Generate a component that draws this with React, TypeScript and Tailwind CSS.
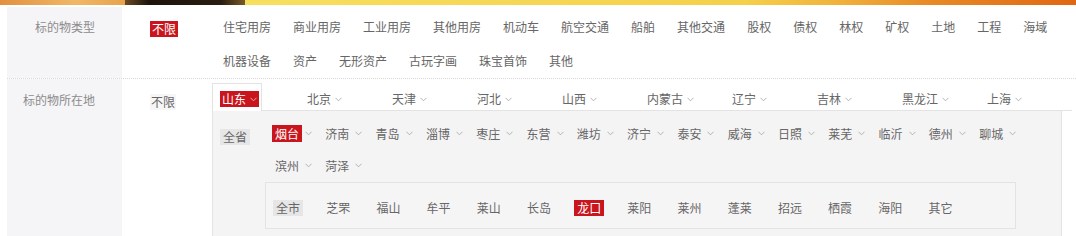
import React from 'react';

const types = [
  '住宅用房', '商业用房', '工业用房', '其他用房', '机动车', '航空交通', '船舶', '其他交通',
  '股权', '债权', '林权', '矿权', '土地', '工程', '海域',
  '机器设备', '资产', '无形资产', '古玩字画', '珠宝首饰', '其他',
];

const provinces = ['北京', '天津', '河北', '山西', '内蒙古', '辽宁', '吉林', '黑龙江', '上海'];

const cities = [
  '烟台', '济南', '青岛', '淄博', '枣庄', '东营', '潍坊', '济宁', '泰安', '威海',
  '日照', '莱芜', '临沂', '德州', '聊城', '滨州', '菏泽',
];

const districts = ['芝罘', '福山', '牟平', '莱山', '长岛', '龙口', '莱阳', '莱州', '蓬莱', '招远', '栖霞', '海阳', '其它'];

const Arrow: React.FC<{ light?: boolean; className?: string }> = ({ light, className }) => (
  <svg width="7" height="5" viewBox="0 0 7 5" className={className}>
    <polyline
      points="0.5,0.8 3.5,3.8 6.5,0.8"
      fill="none"
      stroke={light ? '#f3b9b9' : '#aaaaaa'}
      strokeWidth="0.9"
    />
  </svg>
);

const App: React.FC = () => {
  return (
    <div className="w-[1076px] h-[236px] overflow-hidden bg-white text-[12px] text-[#666] font-['Noto_Sans_CJK_SC','Microsoft_YaHei',sans-serif]">
      {/* banner strip */}
      <div className="flex h-[5px]">
        <div className="w-[125px] bg-[linear-gradient(90deg,#e29040,#f0b866_60%,#e9a24c)]" />
        <div className="w-[120px] bg-[linear-gradient(90deg,#6a4a22,#1e140c_20%,#2a1c10_80%,#7a5a28)]" />
        <div className="flex-1 bg-[linear-gradient(90deg,#f7df5e_0%,#f5d04a_60%,#f0b03a_72%,#e88a26_82%,#e06612_100%)]" />
      </div>

      <div className="pl-[7px] pt-[2px]">
        {/* row 1 */}
        <div className="flex border-b border-dotted border-[#d8d8d8]">
          <div className="w-[115px] shrink-0 bg-[#f5f4f7] pr-[27px] pt-[3px] text-right leading-[34px] text-[#8c8c8c]">
            标的物类型
          </div>
          <div className="w-[90px] shrink-0 pl-[28px] pt-[3px] leading-[34px]">
            <span className="inline-block bg-[#c9161e] px-[2px] leading-[16px] text-white align-middle">不限</span>
          </div>
          <div className="flex w-[850px] flex-wrap pt-[3px] leading-[34px]">
            {types.map((t) => (
              <span key={t} className="mx-[11px]">
                {t}
              </span>
            ))}
          </div>
        </div>

        {/* row 2 */}
        <div className="flex">
          <div className="h-[160px] w-[115px] shrink-0 bg-[#f5f4f7] pr-[27px] pt-[4px] text-right leading-[34px] text-[#8c8c8c]">
            标的物所在地
          </div>
          <div className="w-[90px] shrink-0 pl-[28px] pt-[4px] leading-[34px]">
            <span className="inline-block bg-[#f6f6f6] px-[1px] leading-[16px] align-middle">不限</span>
          </div>
          <div className="w-[850px] shrink-0">
            {/* province tabs */}
            <div className="mt-[4px] flex h-[28px]">
              <div className="h-[28px] w-[50px] shrink-0 border border-b-0 border-[#e3e3e3] bg-white pl-[7px] pt-[7px]">
                <span className="flex h-[16px] w-fit items-center whitespace-nowrap bg-[#c9161e] px-[2px] leading-[16px] text-white">
                  山东
                  <Arrow light className="ml-[4px] shrink-0" />
                </span>
              </div>
              <div className="flex flex-1 border-b border-[#e3e3e3]">
                <div className="ml-[45px] flex">
                  {provinces.map((p) => (
                    <span key={p} className="mt-[8px] flex h-[16px] w-[85px] shrink-0 items-center leading-[16px]">
                      {p}
                      <Arrow className="ml-[4px]" />
                    </span>
                  ))}
                </div>
              </div>
            </div>

            {/* city panel */}
            <div className="flex h-[126px] border-x border-[#e3e3e3] bg-[#f5f4f5]">
              <div className="w-[52px] shrink-0 pl-[7px] pt-[17px]">
                <span className="inline-block bg-[#e6e6e6] px-[3px] leading-[16px]">全省</span>
              </div>
              <div className="w-[790px] shrink-0">
                <div className="flex flex-wrap pl-[7px] pt-[6px]">
                  {cities.map((c, i) => (
                    <span key={c} className="flex h-[32px] w-[50.3px] shrink-0 items-center">
                      <span className={`whitespace-nowrap px-[3px] leading-[17px] ${i === 0 ? 'bg-[#c9161e] text-white' : ''}`}>{c}</span>
                      <Arrow className="ml-[3px] shrink-0" />
                    </span>
                  ))}
                </div>
                <div className="mt-[1px] flex h-[47px] w-[751px] border border-[#e3e3e3] bg-[#f6f5f6] pl-[7px] pt-[16px]">
                  <span className="w-[50.2px] shrink-0">
                    <span className="inline-block bg-[#e6e6e6] px-[3px] leading-[16px]">全市</span>
                  </span>
                  {districts.map((d) => (
                    <span key={d} className="w-[50.2px] shrink-0">
                      <span
                        className={`inline-block px-[3px] leading-[16px] ${d === '龙口' ? 'bg-[#c9161e] text-white' : ''}`}
                      >
                        {d}
                      </span>
                    </span>
                  ))}
                </div>
              </div>
            </div>
          </div>
        </div>
      </div>
    </div>
  );
};

export default App;
